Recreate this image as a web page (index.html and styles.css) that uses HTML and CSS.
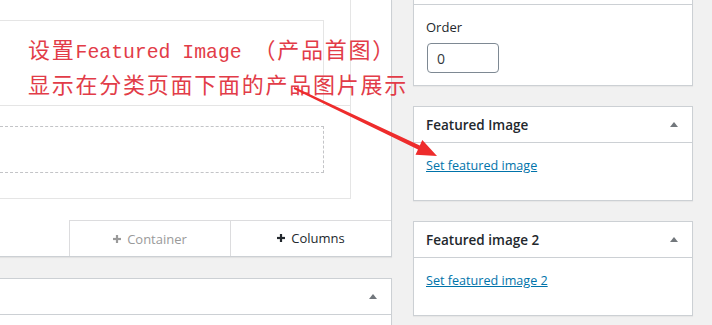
FILE: index.html
```html
<!DOCTYPE html>
<html lang="zh-CN">
<head>
    <meta charset="UTF-8">
    <meta name="viewport" content="width=device-width, initial-scale=1.0">
    <title>Edit Product</title>
    <link rel="stylesheet" href="styles.css">
</head>
<body>
<div class="page">
  <div class="main-col">
    <div class="builder">
      <div class="layout">
        <div class="row-top"><div class="row-inner"></div></div>
        <div class="row-bottom"><div class="drop-zone"></div></div>
      </div>
      <div class="builder-actions">
        <button class="add-btn muted"><svg class="plus" viewBox="0 0 8 8"><rect x="2.9" y="0" width="2.2" height="8"/><rect x="0" y="2.9" width="8" height="2.2"/></svg>Container</button>
        <button class="add-btn"><svg class="plus" viewBox="0 0 8 8"><rect x="2.9" y="0" width="2.2" height="8"/><rect x="0" y="2.9" width="8" height="2.2"/></svg>Columns</button>
      </div>
    </div>

    <div class="postbox wide">
      <div class="hndle"><span></span><span class="toggle"></span></div>
      <div class="inside"></div>
    </div>
  </div>

  <div class="side-col">
    <div class="postbox cut">
      <div class="cut-head"></div>
      <div class="attrs">
        <label class="attr-label" for="menu_order">Order</label>
        <input class="attr-input" type="text" id="menu_order" value="0">
      </div>
    </div>

    <div class="postbox">
      <div class="hndle"><span>Featured Image</span><span class="toggle"></span></div>
      <div class="inside"><a href="#">Set featured image</a></div>
    </div>

    <div class="postbox">
      <div class="hndle"><span>Featured image 2</span><span class="toggle"></span></div>
      <div class="inside"><a href="#">Set featured image 2</a></div>
    </div>
  </div>
</div>

<!-- annotation drawn over the screenshot -->
<div class="annot">
  <div class="annot-line">设置<span class="latin">Featured Image </span>（产品首图）</div>
  <div class="annot-line">显示在分类页面下面的产品图片展示</div>
</div>
<svg class="annot-arrow" width="712" height="325" viewBox="0 0 712 325">
  <polygon points="294.3,87.1 419.8,145.4 422.3,140 437,156 415.5,154.8 418,149.4 293.7,88.9"/>
</svg>
</body>
</html>
```

FILE: styles.css
```css
* {
  box-sizing: border-box;
}

body {
  margin: 0;
  background: #f1f1f1;
  font-family: "Open Sans", sans-serif;
  font-size: 13px;
  color: #23282d;
  position: relative;
  overflow: hidden;
  height: 325px;
}

.page {
  display: flex;
  align-items: flex-start;
  gap: 21px;
}

.main-col {
  width: 392px;
}

.side-col {
  width: 280px;
}

/* page builder */
.builder {
  background: #fff;
  border-right: 1px solid #ccd0d4;
  border-bottom: 1px solid #ccd0d4;
  box-shadow: 0 1px 1px rgba(0,0,0,0.06);
}

.layout {
  width: 351px;
  border-right: 1px solid #e5e5e5;
  border-bottom: 1px solid #e5e5e5;
}

.row-top {
  height: 106px;
  padding-top: 20px;
  border-bottom: 1px solid #e5e5e5;
}

.row-inner {
  width: 324px;
  height: 85px;
  border-top: 1px solid #e5e5e5;
  border-right: 1px solid #e5e5e5;
}

.row-bottom {
  height: 92px;
  padding-top: 20px;
}

.drop-zone {
  width: 324px;
  height: 47px;
  border: 1px dashed #c3c4c7;
  border-left: none;
}

.builder-actions {
  display: flex;
  justify-content: flex-end;
  margin-top: 21px;
}

.add-btn {
  width: 161px;
  height: 36px;
  border: none;
  border-top: 1px solid #dcdcde;
  border-left: 1px solid #dcdcde;
  background: #fff;
  font-family: "Open Sans", sans-serif;
  font-size: 13px;
  color: #23282d;
  display: flex;
  align-items: center;
  justify-content: center;
  gap: 6px;
  padding: 0 0 2px;
}

.add-btn.muted {
  color: #9a9a9a;
  padding: 0;
}

.plus {
  width: 8px;
  height: 8px;
  fill: currentColor;
}

/* meta boxes */
.postbox {
  background: #fff;
  border: 1px solid #ccd0d4;
  box-shadow: 0 1px 1px rgba(0,0,0,0.04);
  margin-top: 20px;
}

.postbox.wide {
  margin-top: 21px;
  border-left: none;
  border-bottom: none;
}

.postbox.cut {
  margin-top: 0;
  border-top: none;
}

.cut-head {
  height: 5px;
  border-bottom: 1px solid #ccd0d4;
}

.hndle {
  height: 36px;
  padding: 0 14px 0 12px;
  border-bottom: 1px solid #ccd0d4;
  display: flex;
  align-items: center;
  justify-content: space-between;
  font-size: 13.5px;
  font-weight: 600;
}

.toggle {
  width: 0;
  height: 0;
  border-left: 4px solid transparent;
  border-right: 4px solid transparent;
  border-bottom: 5px solid #72777c;
}

.inside {
  padding: 13px 12px 24px;
  line-height: 20px;
  font-size: 12.6px;
}

.inside a {
  color: #0073aa;
}

.attrs {
  padding: 13px 12px 12px;
}

.attr-label {
  display: block;
  line-height: 19px;
}

.attr-input {
  display: block;
  margin: 6px 0 0 1px;
  width: 72px;
  height: 30px;
  border: 1px solid #7e8993;
  border-radius: 4px;
  padding: 0 9px;
  font-family: "Open Sans", sans-serif;
  font-size: 14px;
  color: #32373c;
}

/* red annotation */
.annot {
  position: absolute;
  left: 28px;
  top: 34px;
  color: #e23c48;
  font-family: "Noto Sans CJK SC", sans-serif;
  font-size: 22px;
  line-height: 29.5px;
  letter-spacing: 1.75px;
  white-space: nowrap;
}

.annot .latin {
  font-family: "Liberation Mono", monospace;
  font-size: 19.8px;
  letter-spacing: 0;
}

.annot-arrow {
  position: absolute;
  left: 0;
  top: 0;
  fill: #ee2c2c;
}
```
